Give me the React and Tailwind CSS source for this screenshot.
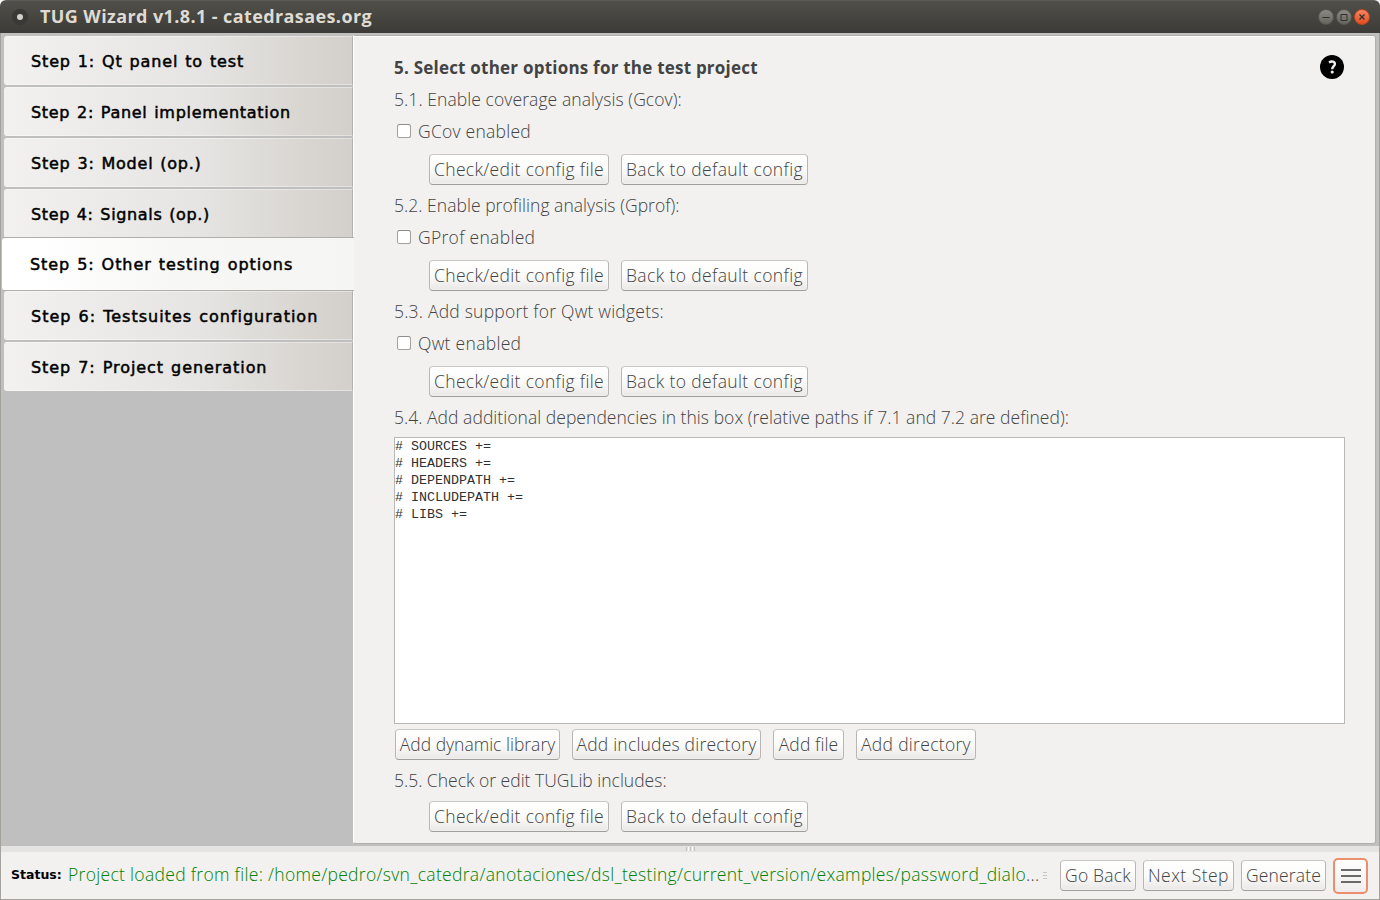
import React from "react";

const steps = [
  { label: "Step 1: Qt panel to test", tracking: "tracking-[0.86px]" },
  { label: "Step 2: Panel implementation", tracking: "tracking-[0.7px]" },
  { label: "Step 3: Model (op.)", tracking: "tracking-[0.78px]" },
  { label: "Step 4: Signals (op.)", tracking: "tracking-[0.65px]" },
  { label: "Step 5: Other testing options", tracking: "tracking-[0.93px]", active: true },
  { label: "Step 6: Testsuites configuration", tracking: "tracking-[1px]" },
  { label: "Step 7: Project generation", tracking: "tracking-[0.94px]" },
];

function Step({ label, tracking, active }) {
  if (active) {
    return (
      <div className="relative z-10 -mt-[3px] ml-px flex h-[54px] w-[352px] items-center rounded-l-[3px] border-y border-[#b2afab] bg-linear-to-r from-white from-10% via-[#f7f7f6] via-50% to-[#f5f5f3] pl-7 pt-px">
        <span className={tracking}>{label}</span>
      </div>
    );
  }
  return (
    <div className="mb-[2px] ml-[3px] flex h-[49px] items-center rounded-l-[3px] border-y border-y-white/40 border-r border-r-[#b2b0ad] bg-linear-to-r from-[#f2f1ef] via-[#e6e5e3] via-55% to-[#d3cfca] pl-[27px] pt-[3px]">
      <span className={tracking}>{label}</span>
    </div>
  );
}

function Button({ width, tracking = "", children }) {
  return (
    <button
      className={`flex h-[31px] shrink-0 items-center justify-center whitespace-nowrap rounded-[4px] border border-[#b8b6b3] border-t-[#cac8c5] border-b-[#a09e9b] bg-linear-to-b from-white via-[#fbfbfa] to-[#eae8e7] pb-px shadow-[inset_0_0_2px_#ffffff] ${width} ${tracking}`}
    >
      {children}
    </button>
  );
}

function ConfigButtons() {
  return (
    <div className="ml-[35px] flex gap-3">
      <Button width="w-[180px]" tracking="tracking-[0.34px]">Check/edit config file</Button>
      <Button width="w-[187px]" tracking="tracking-[0.38px]">Back to default config</Button>
    </div>
  );
}

function Option({ title, titleTracking, label, labelTracking }) {
  return (
    <section className="h-[106px]">
      <h3 className={`h-8 leading-[30px] ${titleTracking}`}>{title}</h3>
      <label className="flex h-[38px] items-start pl-[3px]">
        <span className="mt-[8px] h-[14px] w-[14px] rounded-[2.5px] border border-[#a3a09d] border-t-[#8f8c89] bg-white" />
        <span className={`ml-[7px] leading-[30px] ${labelTracking}`}>{label}</span>
      </label>
      <ConfigButtons />
    </section>
  );
}

function WindowButton({ close, children }) {
  return (
    <span
      className={`flex h-4 w-4 items-center justify-center rounded-full border ${
        close
          ? "border-[#c2451f] bg-linear-to-b from-[#f68560] to-[#e44a1b]"
          : "border-[#56554f] bg-linear-to-b from-[#8c8a82] to-[#66655e]"
      }`}
    >
      <svg viewBox="0 0 14 14" className="h-[14px] w-[14px] shrink-0" fill="none" stroke="#33322e" strokeWidth="1">
        {children}
      </svg>
    </span>
  );
}

export default function App() {
  return (
    <div className="h-[900px] w-[1380px] overflow-hidden bg-white">
      <div className="flex h-full flex-col overflow-hidden rounded-t-[6px] font-['Open_Sans',sans-serif] text-[17.5px] font-light text-[#434343]">
        <header className="flex h-[33px] shrink-0 items-center border-t border-[#5c5b55] bg-linear-to-b from-[#504f49] to-[#3c3b37] pl-3 pr-[10.5px]">
          <span className="flex h-4 w-4 items-center justify-center rounded-full bg-[#3a3935]">
            <span className="h-[6px] w-[6px] rounded-full bg-[#d5d1c8]" />
          </span>
          <h1 className="ml-3 flex-1 whitespace-nowrap pb-px text-[18px] font-bold tracking-[0.4px] text-[#dfdbd2]">
            TUG Wizard v1.8.1 - catedrasaes.org
          </h1>
          <div className="flex gap-[2px]">
            <WindowButton><path d="M3.5 7.5h7" /></WindowButton>
            <WindowButton><path d="M4 4.5h6v6h-6z" /></WindowButton>
            <WindowButton close><path d="M4.5 4.5l5 5M9.5 4.5l-5 5" strokeWidth="1.4" /></WindowButton>
          </div>
        </header>

        <div className="flex min-h-0 flex-1 flex-col border border-t-0 border-[#a5a29e] bg-[#f2f1f0]">
          <main className="flex h-[813px] shrink-0 bg-[#bfbfbf]">
            <nav className="w-[352px] shrink-0 whitespace-nowrap pt-[3px] font-['DejaVu_Sans',sans-serif] text-[16px] font-normal text-black [-webkit-text-stroke:0.5px_black] [word-spacing:1px]">
              {steps.map((s) => (
                <Step key={s.label} {...s} />
              ))}
            </nav>
            <div className="mt-[2px] h-[809px] w-[1023px] shrink-0 rounded-r-[3px] rounded-bl-[3px] border border-[#b2b0ad] border-l-white bg-[#f2f1f0] pl-10 shadow-[inset_0_1px_0_#ffffff] pt-4">
              <div className="flex h-8 w-[950px] items-center justify-between">
                <h2 className="text-[17px] font-bold tracking-[0.22px]">
                  5. Select other options for the test project
                </h2>
                <svg viewBox="0 0 24 24" className="mb-[2px] h-6 w-6" fill="none">
                  <circle cx="12" cy="12" r="12" fill="#000" />
                  <path d="M9 7.4c2.6-1.7 5.9-1 5.9 1.5 0 2.3-2.7 2.4-2.7 5.4" stroke="#f2f1f0" strokeWidth="2.4" />
                  <circle cx="12.2" cy="17" r="1.6" fill="#f2f1f0" />
                </svg>
              </div>
              <Option title="5.1. Enable coverage analysis (Gcov):" titleTracking="tracking-[0.08px]" label="GCov enabled" labelTracking="tracking-[0.25px]" />
              <Option title="5.2. Enable profiling analysis (Gprof):" titleTracking="tracking-[0.04px]" label="GProf enabled" labelTracking="tracking-[0.3px]" />
              <Option title="5.3. Add support for Qwt widgets:" titleTracking="tracking-[0.22px]" label="Qwt enabled" labelTracking="tracking-[0.3px]" />
              <h3 className="h-8 whitespace-nowrap leading-[30px] tracking-[0.04px]">
                5.4. Add additional dependencies in this box (relative paths if 7.1 and 7.2 are defined):
              </h3>
              <pre className="mt-[3px] h-[287px] w-[951px] border border-[#bab8b5] bg-white font-['Liberation_Mono',monospace] text-[13.33px] font-normal leading-[17px] text-[#303030]">
{`# SOURCES +=
# HEADERS +=
# DEPENDPATH +=
# INCLUDEPATH +=
# LIBS +=`}
              </pre>
              <div className="ml-px mt-[5px] flex gap-3">
                <Button width="w-[165px]">Add dynamic library</Button>
                <Button width="w-[189px]" tracking="tracking-[0.2px]">Add includes directory</Button>
                <Button width="w-[71px]" tracking="tracking-[0.1px]">Add file</Button>
                <Button width="w-[120px]" tracking="tracking-[0.3px]">Add directory</Button>
              </div>
              <h3 className="mb-[4px] mt-[5px] h-8 leading-[30px]">5.5. Check or edit TUGLib includes:</h3>
              <ConfigButtons />
            </div>
          </main>

          <div className="flex h-[6px] shrink-0 items-center justify-center gap-px bg-[#e4e3e1]">
            <span className="h-1 w-px bg-[#c4c2bf]" />
            <span className="h-1 w-px bg-white" />
            <span className="h-1 w-px bg-[#c4c2bf]" />
            <span className="h-1 w-px bg-white" />
            <span className="h-1 w-px bg-[#c4c2bf]" />
          </div>

          <footer className="flex min-h-0 flex-1 items-center pl-[10px] pr-[10px]">
            <strong className="w-[57px] shrink-0 font-['DejaVu_Sans',sans-serif] text-[12.5px] font-bold text-black">
              Status:
            </strong>
            <span className="w-[972px] shrink-0 whitespace-nowrap pb-[2px] tracking-[0.31px] text-[#008000]">
              Project loaded from file: /home/pedro/svn_catedra/anotaciones/dsl_testing/current_version/examples/password_dialo<span className="text-[#434343]">...</span>
            </span>
            <span className="ml-[3px] flex w-[17px] flex-col gap-[2px]">
              <span className="h-px w-1 bg-[#c9c7c4]" />
              <span className="h-px w-1 bg-[#c9c7c4]" />
              <span className="h-px w-1 bg-[#c9c7c4]" />
            </span>
            <div className="flex items-center gap-[7px]">
              <Button width="w-[76px]" tracking="tracking-[0.2px]">Go Back</Button>
              <Button width="w-[91px]" tracking="tracking-[0.47px]">Next Step</Button>
              <Button width="w-[85px]" tracking="tracking-[0.15px]">Generate</Button>
              <button className="flex h-9 w-[35px] items-center justify-center rounded-[5px] border-2 border-[#ec8d6b] bg-linear-to-b from-white to-[#efedec]">
                <svg viewBox="0 0 20 16" className="h-4 w-5 shrink-0" stroke="#3c3c3c" strokeWidth="1.6">
                  <path d="M0 2h20M0 8h20M0 14h20" />
                </svg>
              </button>
            </div>
          </footer>
        </div>
      </div>
    </div>
  );
}
